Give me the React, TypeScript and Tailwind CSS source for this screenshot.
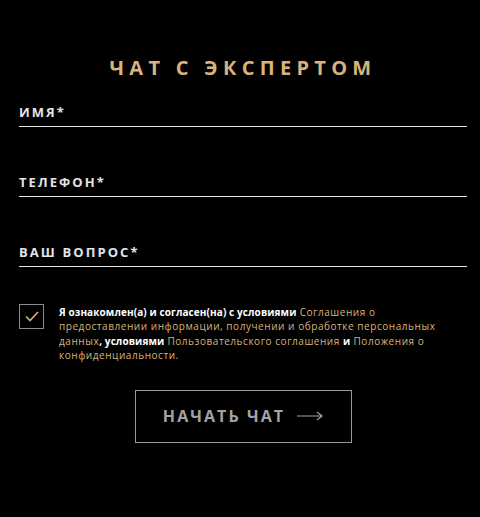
import React, { useState } from 'react';

const fieldLabels = ['Имя*', 'Телефон*', 'Ваш вопрос*'];

export default function App() {
  const [agreed, setAgreed] = useState(true);

  return (
    <div
      className="w-[480px] h-[517px] bg-black pl-[19px] pr-[13px] pt-[54px]"
      style={{ fontFamily: '"Open Sans", "DejaVu Sans", sans-serif' }}
    >
      <h2 className="text-center text-[20px] leading-[28px] font-bold uppercase tracking-[0.265em] text-[#d8b47c]">
        Чат с экспертом
      </h2>

      <div className="mt-[18px] flex flex-col gap-[43px]">
        {fieldLabels.map((label) => (
          <label key={label} className="block border-b border-[#e6e6e6] pb-[2px]">
            <span className="block text-[13px] leading-[24px] font-bold uppercase tracking-[0.16em] text-[#e4e4e4]">
              {label}
            </span>
          </label>
        ))}
      </div>

      <div className="mt-[37px] flex items-start gap-[15px]">
        <button
          type="button"
          onClick={() => setAgreed(!agreed)}
          className="w-[25px] h-[25px] shrink-0 border border-[#8c8c8c] flex items-center justify-center"
        >
          {agreed && (
            <svg width="14" height="11" viewBox="0 0 14 11" fill="none">
              <path d="M1 5.5 L5 9.5 L13 1" stroke="#d8b47c" strokeWidth="1.6" />
            </svg>
          )}
        </button>
        <p className="pt-[1px] text-[10px] leading-[14.4px] text-[#d8b47c] tracking-[0.055em] pr-[10px]">
          <span className="font-bold text-white tracking-[0.01em]">Я ознакомлен(а) и согласен(на) с условиями</span>{' '}
          Соглашения о предоставлении информации, получении и обработке персональных данных
          <span className="font-bold text-white tracking-[0.01em]">, условиями</span> Пользовательского соглашения{' '}
          <span className="font-bold text-white tracking-[0.01em]">и</span> Положения о конфиденциальности.
        </p>
      </div>

      <div className="mt-[27px] flex justify-center">
        <button
          type="button"
          className="w-[217px] h-[53px] border border-[#9a9a9a] flex items-center justify-center gap-[12px] text-[#a3a3a3] text-[16px] font-bold uppercase tracking-[0.13em]"
        >
          <span>Начать чат</span>
          <svg width="26" height="10" viewBox="0 0 26 10" fill="none">
            <path d="M0 5 H25 M20 1 L25 5 L20 9" stroke="#a3a3a3" strokeWidth="1.2" />
          </svg>
        </button>
      </div>
    </div>
  );
}
